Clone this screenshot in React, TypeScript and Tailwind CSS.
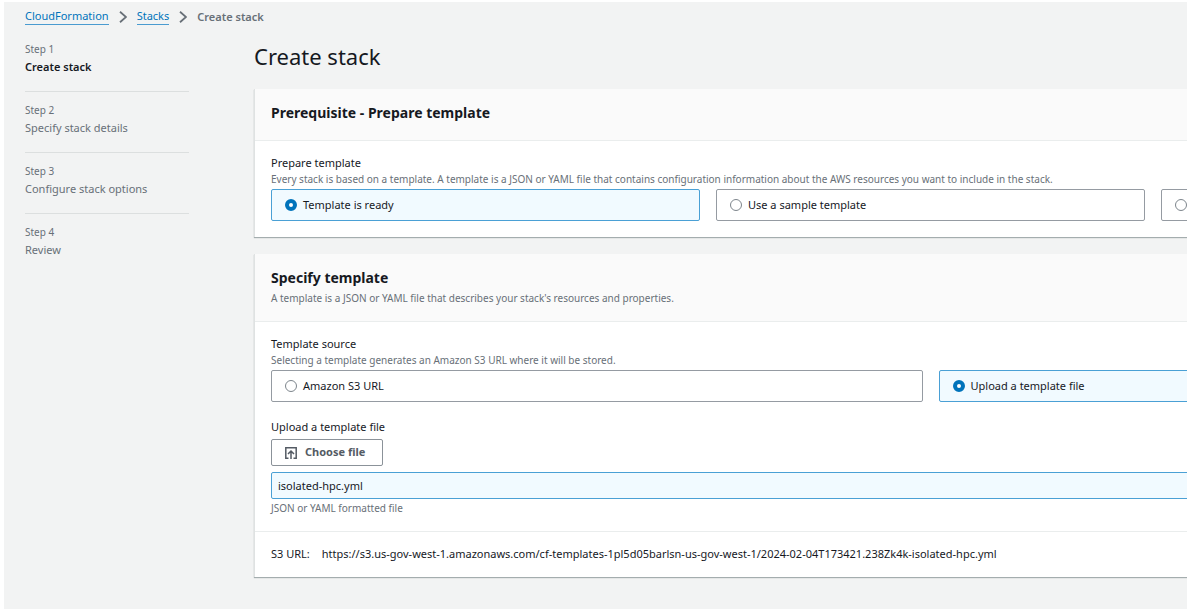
import { Fragment, useState } from "react";

const steps = ["Create stack", "Specify stack details", "Configure stack options", "Review"];

function Chevron() {
  return (
    <svg className="h-3 w-2" viewBox="0 0 8 12" fill="none" stroke="#687078" strokeWidth="1.8" aria-hidden="true">
      <path d="M1 0.8l6 5.2L1 11.2" />
    </svg>
  );
}

function Tile({ name, label, checked, onSelect }: { name: string; label: string; checked: boolean; onSelect: () => void }) {
  return (
    <label
      className={`flex h-8 flex-1 items-center gap-1.5 rounded-xs border pl-[13px] text-[11px] ${
        checked ? "border-[#4aa0d5] bg-[#f1faff]" : "border-[#959ba2] bg-white"
      }`}
    >
      <input
        type="radio"
        name={name}
        checked={checked}
        onChange={onSelect}
        aria-label={label || "Other template"}
        className="size-3 appearance-none rounded-full border border-[#7d858c] bg-white checked:border-4 checked:border-[#0073bb]"
      />
      {label}
    </label>
  );
}

function Tiles({ name, options, initial }: { name: string; options: string[]; initial: number }) {
  const [selected, setSelected] = useState(initial);
  return (
    <div className="mt-[3px] flex gap-4">
      {options.map((label, i) => (
        <Tile key={label} name={name} label={label} checked={i === selected} onSelect={() => setSelected(i)} />
      ))}
    </div>
  );
}

const card = "border-l border-l-[#dfe2e2] bg-white shadow-[0_1px_1px_#a4adae]";
const hint = "text-[10px] leading-[14px] text-[#687078]";
const fieldLabel = "text-[11px] leading-[18px]";

export default function App() {
  return (
    <div className="min-h-screen bg-white pt-0.5 pr-0.5 pl-1 font-['Noto_Sans',sans-serif] text-[#16191f]">
      <div className="min-h-[calc(100vh-2px)] overflow-hidden bg-[#f2f3f3] pb-8 pl-[21px]">
        <nav aria-label="Breadcrumb" className="flex h-7 items-center gap-2.5 pt-px text-[11px] leading-4">
          {["CloudFormation", "Stacks"].map((item) => (
            <Fragment key={item}>
              <a href="#" className="border-b border-[#4a9bd0] text-[#0073bb]">{item}</a>
              <Chevron />
            </Fragment>
          ))}
          <span className="font-semibold text-[#687078]">Create stack</span>
        </nav>

        <div className="flex gap-[65px]">
          <ol className="w-[164px] shrink-0 pt-[11px]">
            {steps.map((title, i) => (
              <li key={title} className="mb-2.5 border-b border-[#dcdfdf] pb-3.5 last:border-b-0">
                <div className="text-[10px] leading-4 text-[#687078]">Step {i + 1}</div>
                <div className={`text-[11px] leading-5 ${i === 0 ? "font-semibold" : "text-[#687078]"}`}>{title}</div>
              </li>
            ))}
          </ol>

          <main className="min-w-[1352px] flex-1">
            <h1 className="h-[59px] pt-[11px] text-[22px] leading-[30px]">Create stack</h1>

            <section className={card}>
              <header className="border-b border-[#eaeded] bg-[#fafafa] px-4 pt-3.5 pb-[17px]">
                <h2 className="text-[14px] leading-5 font-bold">Prerequisite - Prepare template</h2>
              </header>
              <div className="px-4 pt-[13px] pb-4">
                <div className={fieldLabel}>Prepare template</div>
                <p className={hint}>
                  Every stack is based on a template. A template is a JSON or YAML file that contains configuration information about the AWS resources you want to include in the stack.
                </p>
                <Tiles name="prepare" initial={0} options={["Template is ready", "Use a sample template", ""]} />
              </div>
            </section>

            <section className={`mt-[17px] ${card}`}>
              <header className="border-b border-[#eaeded] bg-[#fafafa] px-4 pt-3.5 pb-4">
                <h2 className="mb-[3px] text-[14px] leading-5 font-bold">Specify template</h2>
                <p className={hint}>A template is a JSON or YAML file that describes your stack's resources and properties.</p>
              </header>
              <div className="px-4 pt-[13px] pb-4">
                <div className={fieldLabel}>Template source</div>
                <p className={hint}>Selecting a template generates an Amazon S3 URL where it will be stored.</p>
                <Tiles name="source" initial={1} options={["Amazon S3 URL", "Upload a template file"]} />
                <label htmlFor="file-name" className={`mt-4 mb-[3px] block ${fieldLabel}`}>Upload a template file</label>
                <button type="button" className="mb-1.5 flex h-[27px] items-center gap-2 rounded-xs border border-[#8b9299] pr-[17px] pl-[13px] text-[11px] font-bold text-[#545b64]">
                  <svg className="size-3" viewBox="0 0 12 12" fill="none" stroke="currentColor" strokeWidth="1.5" aria-hidden="true">
                    <path d="M3.5 11.2H.8V.8h10.4v10.4H8.5M6 12V4M3 7l3-3 3 3" />
                  </svg>
                  Choose file
                </button>
                <input
                  id="file-name"
                  readOnly
                  value="isolated-hpc.yml"
                  className="mb-0.5 block h-[27px] w-full rounded-xs border border-[#4aa0d5] bg-[#f1faff] px-1.5 text-[11px]"
                />
                <p className={hint}>JSON or YAML formatted file</p>
              </div>
              <div className="flex gap-3 border-t border-[#eaeded] px-4 pt-3 pb-[13px] text-[11px] leading-5">
                <span>S3 URL:</span>
                <span>https://s3.us-gov-west-1.amazonaws.com/cf-templates-1pl5d05barlsn-us-gov-west-1/2024-02-04T173421.238Zk4k-isolated-hpc.yml</span>
              </div>
            </section>
          </main>
        </div>
      </div>
    </div>
  );
}
